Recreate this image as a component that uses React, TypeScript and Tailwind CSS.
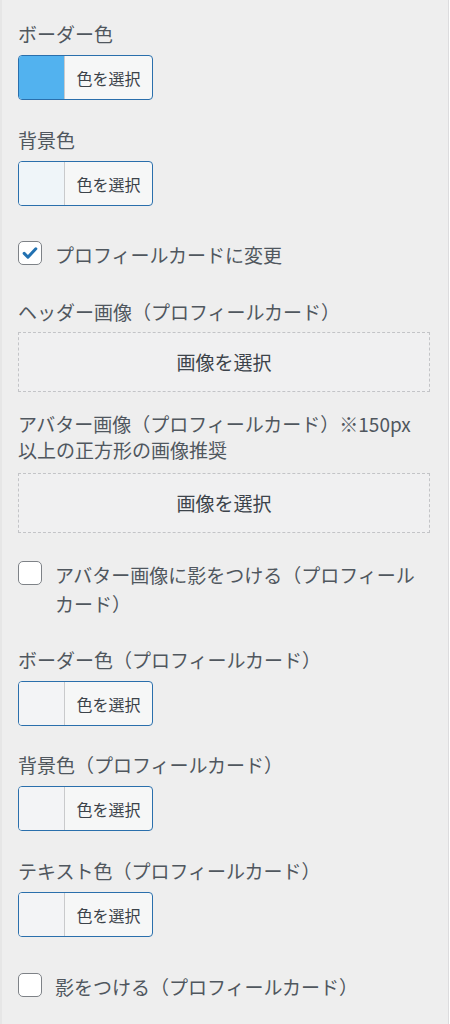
import type { ReactNode } from 'react'

const font = { fontFamily: '"Noto Sans CJK JP", "Noto Sans", sans-serif' }

function Label({ children, className = '' }: { children: ReactNode; className?: string }) {
  return (
    <div className={`text-[19px] leading-[26px] text-[#50575e] ${className}`}>{children}</div>
  )
}

function ColorButton({ swatch }: { swatch: string }) {
  return (
    <button className="flex h-[45px] w-[135px] overflow-hidden rounded-[4px] border-[1.5px] border-[#2a6fac] bg-[#f6f7f7]">
      <span className={`h-full w-[46px] shrink-0 border-r border-[#c9cacc] ${swatch}`} />
      <span className="flex flex-1 items-center justify-center text-[16px] text-[#3c434a]">
        色を選択
      </span>
    </button>
  )
}

function ImageButton() {
  return (
    <button className="flex h-[60px] w-full items-center justify-center border border-dashed border-[#c3c4c7] bg-[#f0f0f1] text-[19px] text-[#3c434a]">
      画像を選択
    </button>
  )
}

function Checkbox({ checked, children }: { checked?: boolean; children: ReactNode }) {
  return (
    <label className="flex items-start gap-[13px]">
      <span className="mt-[1px] flex h-[24px] w-[24px] shrink-0 items-center justify-center rounded-[5px] border-[1.5px] border-[#7e8287] bg-white">
        {checked && (
          <svg viewBox="0 0 24 24" className="h-[20px] w-[20px]">
            <path d="M5 12.5l4.5 4.5L19 7" fill="none" stroke="#2271b1" strokeWidth="3.6" strokeLinecap="round" strokeLinejoin="round" />
          </svg>
        )}
      </span>
      <span className="text-[19px] leading-[29px] text-[#50575e]">{children}</span>
    </label>
  )
}

export default function App() {
  return (
    <div
      style={font}
      className="h-[1024px] w-[449px] overflow-hidden border-l-2 border-r border-l-[#e6e6e6] border-r-[#dcdcde] bg-[#eeeeee] pl-[16px] pr-[18px] pt-[21px]"
    >
      <Label>ボーダー色</Label>
      <div className="mt-[8px]">
        <ColorButton swatch="bg-[#52b2ef]" />
      </div>

      <Label className="mt-[27px]">背景色</Label>
      <div className="mt-[8px]">
        <ColorButton swatch="bg-[#eff5f9]" />
      </div>

      <div className="mt-[34px]">
        <Checkbox checked>プロフィールカードに変更</Checkbox>
      </div>

      <Label className="mt-[30px]">ヘッダー画像（プロフィールカード）</Label>
      <div className="mt-[7px]">
        <ImageButton />
      </div>

      <Label className="mt-[19px]">
        アバター画像（プロフィールカード）※150px
        <br />
        以上の正方形の画像推奨
      </Label>
      <div className="mt-[10px]">
        <ImageButton />
      </div>

      <div className="mt-[27px]">
        <Checkbox>アバター画像に影をつける（プロフィールカード）</Checkbox>
      </div>

      <Label className="mt-[29px]">ボーダー色（プロフィールカード）</Label>
      <div className="mt-[8px]">
        <ColorButton swatch="bg-[#f3f4f6]" />
      </div>

      <Label className="mt-[26px]">背景色（プロフィールカード）</Label>
      <div className="mt-[8px]">
        <ColorButton swatch="bg-[#f3f4f6]" />
      </div>

      <Label className="mt-[27px]">テキスト色（プロフィールカード）</Label>
      <div className="mt-[8px]">
        <ColorButton swatch="bg-[#f3f4f6]" />
      </div>

      <div className="mt-[35px]">
        <Checkbox>影をつける（プロフィールカード）</Checkbox>
      </div>
    </div>
  )
}
